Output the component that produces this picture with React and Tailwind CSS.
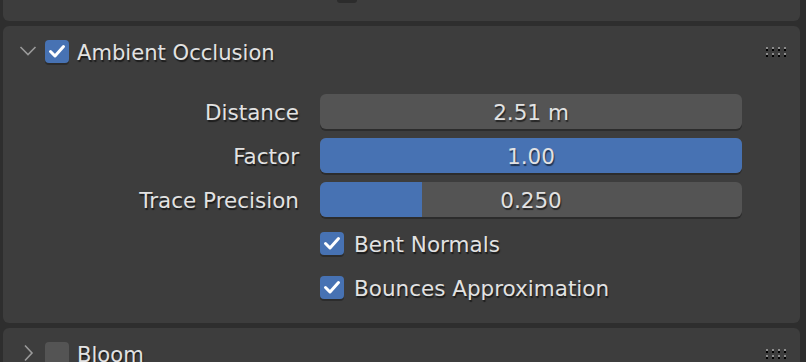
import React from "react";

const font = { fontFamily: '"DejaVu Sans", "Noto Sans", sans-serif' };

function Check({ on }) {
  return (
    <div
      className={`w-[24px] h-[23px] rounded-[4px] shrink-0 flex items-center justify-center shadow-[0_2px_0_#2c2c2c] ${
        on ? "bg-[#4772b3]" : "bg-[#545454]"
      }`}
    >
      {on && (
        <svg width="24" height="23" viewBox="0 0 24 23">
          <polyline
            points="5.5,11.5 10,16 18.5,6.5"
            fill="none"
            stroke="#ffffff"
            strokeWidth="3"
            strokeLinecap="round"
            strokeLinejoin="round"
          />
        </svg>
      )}
    </div>
  );
}

function Dots() {
  const xs = [0, 6, 12, 18];
  const ys = [0, 6];
  return (
    <svg width="20" height="10" viewBox="0 0 20 10">
      {ys.map((y) =>
        xs.map((x) => (
          <g key={`${x}-${y}`}>
            <rect x={x} y={y} width="2" height="2" fill="#8c8c8c" />
            <rect x={x} y={y + 2} width="2" height="2" fill="#000000" />
          </g>
        ))
      )}
    </svg>
  );
}

function Chevron({ open }) {
  return open ? (
    <svg width="18" height="12" viewBox="0 0 18 12">
      <polyline points="1.5,2 9,9.5 16.5,2" fill="none" stroke="#9a9a9a" strokeWidth="1.6" />
    </svg>
  ) : (
    <svg width="12" height="18" viewBox="0 0 12 18">
      <polyline points="3,1.5 10,9 3,16.5" fill="none" stroke="#9a9a9a" strokeWidth="1.6" />
    </svg>
  );
}

const base =
  "leading-none text-[#e2e2e2] translate-y-[1px] [text-shadow:1px_2px_1px_rgba(0,0,0,0.55)]";
const txt = `text-[21.5px] ${base}`;
const title = `text-[21.1px] ${base}`;

function Field({ label, value, fill }) {
  return (
    <div className="flex items-center h-[35px]">
      <div className={`w-[296px] text-right whitespace-nowrap ${txt}`}>{label}</div>
      <div className="ml-[21px] w-[422px] h-[35px] rounded-[6px] bg-[#545454] relative overflow-hidden shadow-[0_2px_0_#2c2c2c]">
        <div className="h-full bg-[#4772b3]" style={{ width: `${fill * 100}%` }} />
        <div className={`absolute inset-0 flex items-center justify-center ${txt}`}>{value}</div>
      </div>
    </div>
  );
}

function CheckRow({ label }) {
  return (
    <div className="flex items-center h-[35px] pl-[317px]">
      <Check on />
      <span className={`ml-[10px] whitespace-nowrap ${txt}`}>{label}</span>
    </div>
  );
}

export default function App() {
  return (
    <div
      className="w-[806px] h-[362px] bg-[#2e2e2e] overflow-hidden flex flex-col pl-[3px] pr-[6px]"
      style={font}
    >
      <div className="h-[21px] shrink-0 rounded-b-[6px] bg-[#3d3d3d] flex">
        <div className="ml-[334px] w-[20px] h-[3px] rounded-b-[3px] bg-[#2c2c2c]" />
      </div>

      <div className="mt-[5px] h-[297px] shrink-0 rounded-[6px] bg-[#3d3d3d] flex flex-col">
        <div className="h-[50px] flex items-center pl-[16px] pr-[14px]">
          <div className="w-[18px] flex justify-center">
            <Chevron open />
          </div>
          <div className="ml-[8px]">
            <Check on />
          </div>
          <span className={`ml-[8px] whitespace-nowrap ${title} translate-y-[2px]`}>Ambient Occlusion</span>
          <div className="ml-auto mt-[1px]">
            <Dots />
          </div>
        </div>
        <div className="pt-[18px] flex flex-col gap-[9px]">
          <Field label="Distance" value="2.51 m" fill={0} />
          <Field label="Factor" value="1.00" fill={1} />
          <Field label="Trace Precision" value="0.250" fill={0.242} />
          <CheckRow label="Bent Normals" />
          <CheckRow label="Bounces Approximation" />
        </div>
      </div>

      <div className="mt-[5px] flex-1 rounded-t-[6px] bg-[#3d3d3d] flex flex-col">
        <div className="h-[50px] flex items-center pl-[16px] pr-[14px]">
          <div className="w-[18px] flex justify-center">
            <Chevron open={false} />
          </div>
          <div className="ml-[8px]">
            <Check on={false} />
          </div>
          <span className={`ml-[8px] whitespace-nowrap ${title} translate-y-[2px]`}>Bloom</span>
          <div className="ml-auto mt-[1px]">
            <Dots />
          </div>
        </div>
      </div>
    </div>
  );
}
